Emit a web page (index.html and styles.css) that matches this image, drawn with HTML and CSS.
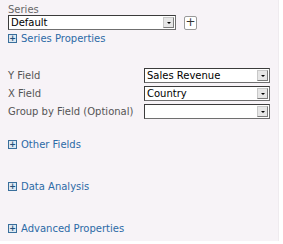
FILE: index.html
```html
<!DOCTYPE html>
<html lang="en">
<head>
    <meta charset="UTF-8">
    <title>Chart Properties</title>
    <link rel="stylesheet" href="styles.css">
</head>
<body>
    <div class="panel">
        <div class="series">
            <div class="label">Series</div>
            <div class="series-row">
                <div class="select wide">
                    <span class="value">Default</span>
                    <span class="arrow"></span>
                </div>
                <div class="add-btn">+</div>
            </div>
            <a class="expander"><span class="box">+</span>Series Properties</a>
        </div>

        <div class="fields">
            <div class="field-label">Y Field</div>
            <div class="select"><span class="value">Sales Revenue</span><span class="arrow"></span></div>
            <div class="field-label">X Field</div>
            <div class="select"><span class="value">Country</span><span class="arrow"></span></div>
            <div class="field-label">Group by Field (Optional)</div>
            <div class="select"><span class="value"></span><span class="arrow"></span></div>
        </div>

        <a class="expander section"><span class="box">+</span>Other Fields</a>
        <a class="expander section"><span class="box">+</span>Data Analysis</a>
        <a class="expander section"><span class="box">+</span>Advanced Properties</a>
    </div>
</body>
</html>
```

FILE: styles.css
```css
body {
    margin: 0;
    background-color: #ffffff;
    font-family: "DejaVu Sans", Verdana, sans-serif;
    font-size: 10px;
}

.panel {
    width: 279px;
    height: 241px;
    padding: 4px 0 0 8px;
    box-sizing: border-box;
    background-color: #f7f3f7;
    border-right: 1px solid #efebef;
}

.label {
    color: #676767;
    line-height: 11px;
}

.series-row {
    display: flex;
    align-items: center;
    gap: 8px;
}

.select {
    display: flex;
    align-items: center;
    height: 15px;
    box-sizing: border-box;
    border: 1px solid #6f6f6f;
    border-top-color: #3b3b3b;
    border-left-color: #3b3b3b;
    background-color: #ffffff;
    padding-left: 2px;
    color: #000000;
}

.select.wide {
    width: 168px;
}

.select .value {
    flex: 1;
    line-height: 13px;
}

.select .arrow {
    width: 11px;
    height: 11px;
    margin-right: 1px;
    background-color: #e6e6e6;
    border: 1px solid #c8c8c8;
    border-right-color: #7c7c7c;
    border-bottom-color: #7c7c7c;
    box-sizing: border-box;
    position: relative;
}

.select .arrow::after {
    content: "";
    position: absolute;
    left: 3px;
    top: 4px;
    border-left: 2px solid transparent;
    border-right: 2px solid transparent;
    border-top: 2px solid #000000;
}

.add-btn {
    width: 13px;
    height: 14px;
    box-sizing: border-box;
    border: 1px solid #9a9a9a;
    border-radius: 2px;
    background-color: #ffffff;
    color: #333333;
    font-size: 12px;
    line-height: 11px;
    text-align: center;
}

.expander {
    display: flex;
    align-items: center;
    color: #2c6aa6;
    line-height: 11px;
    margin-top: 3px;
}

.expander .box {
    width: 7px;
    height: 7px;
    border: 1px solid #3a6f9c;
    background-color: #dde8f2;
    font-size: 8px;
    line-height: 7px;
    text-align: center;
    margin-right: 4px;
    color: #1e4f7a;
    font-weight: bold;
}

.fields {
    display: grid;
    grid-template-columns: 136px 126px;
    row-gap: 3px;
    margin-top: 24px;
    align-items: center;
}

.field-label {
    color: #555555;
}

.section {
    margin-top: 0;
    height: 42px;
}

.fields + .section {
    margin-top: 4px;
}
```
